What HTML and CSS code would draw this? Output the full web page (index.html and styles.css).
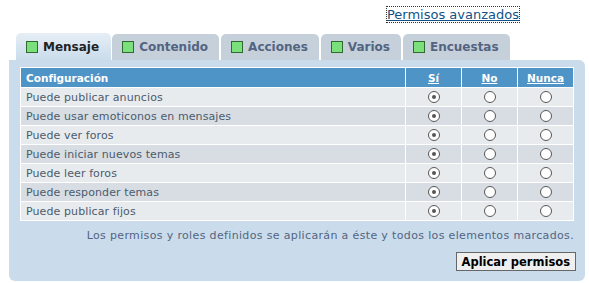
FILE: index.html
```html
<!DOCTYPE html>
<html lang="es">

<head>
    <meta charset="UTF-8">
    <title>Permisos</title>
    <link rel="stylesheet" href="styles.css">
</head>

<body>
    <div class="page">

        <div class="advanced">
            <a href="#" class="advancedLink">Permisos avanzados</a>
        </div>

        <!-- Tabs -->
        <ul class="tabs">
            <li class="tab active"><span class="box"></span>Mensaje</li>
            <li class="tab"><span class="box"></span>Contenido</li>
            <li class="tab"><span class="box"></span>Acciones</li>
            <li class="tab"><span class="box"></span>Varios</li>
            <li class="tab"><span class="box"></span>Encuestas</li>
        </ul>
        <!-- Tabs -->

        <div class="panel">
            <table class="perms">
                <thead>
                    <tr>
                        <th class="name">Configuración</th>
                        <th class="opt"><a href="#">Sí</a></th>
                        <th class="opt"><a href="#">No</a></th>
                        <th class="opt"><a href="#">Nunca</a></th>
                    </tr>
                </thead>
                <tbody>
                    <tr class="row1">
                        <td class="name">Puede publicar anuncios</td>
                        <td class="opt"><input type="radio" name="p1" checked></td>
                        <td class="opt"><input type="radio" name="p1"></td>
                        <td class="opt"><input type="radio" name="p1"></td>
                    </tr>
                    <tr class="row2">
                        <td class="name">Puede usar emoticonos en mensajes</td>
                        <td class="opt"><input type="radio" name="p2" checked></td>
                        <td class="opt"><input type="radio" name="p2"></td>
                        <td class="opt"><input type="radio" name="p2"></td>
                    </tr>
                    <tr class="row1">
                        <td class="name">Puede ver foros</td>
                        <td class="opt"><input type="radio" name="p3" checked></td>
                        <td class="opt"><input type="radio" name="p3"></td>
                        <td class="opt"><input type="radio" name="p3"></td>
                    </tr>
                    <tr class="row2">
                        <td class="name">Puede iniciar nuevos temas</td>
                        <td class="opt"><input type="radio" name="p4" checked></td>
                        <td class="opt"><input type="radio" name="p4"></td>
                        <td class="opt"><input type="radio" name="p4"></td>
                    </tr>
                    <tr class="row1">
                        <td class="name">Puede leer foros</td>
                        <td class="opt"><input type="radio" name="p5" checked></td>
                        <td class="opt"><input type="radio" name="p5"></td>
                        <td class="opt"><input type="radio" name="p5"></td>
                    </tr>
                    <tr class="row2">
                        <td class="name">Puede responder temas</td>
                        <td class="opt"><input type="radio" name="p6" checked></td>
                        <td class="opt"><input type="radio" name="p6"></td>
                        <td class="opt"><input type="radio" name="p6"></td>
                    </tr>
                    <tr class="row1">
                        <td class="name">Puede publicar fijos</td>
                        <td class="opt"><input type="radio" name="p7" checked></td>
                        <td class="opt"><input type="radio" name="p7"></td>
                        <td class="opt"><input type="radio" name="p7"></td>
                    </tr>
                </tbody>
            </table>

            <p class="note">Los permisos y roles definidos se aplicarán a éste y todos los elementos marcados.</p>

            <div class="actions">
                <button class="apply">Aplicar permisos</button>
            </div>
        </div>

    </div>
</body>

</html>
```

FILE: styles.css
```css
body {
    margin: 0;
    background: #ffffff;
    font-family: "DejaVu Sans", Verdana, sans-serif;
}

.page {
    padding: 7px 4px 0 9px;
    width: 576px;
}

.advanced {
    display: flex;
    justify-content: flex-end;
    padding-right: 66px;
    height: 26px;
}

.advancedLink {
    font-size: 13px;
    color: #105289;
    outline: 1px dotted #333;
    line-height: 15px;
    height: 15px;
}

.tabs {
    display: flex;
    list-style-type: none;
    margin: 0;
    padding: 0 0 0 7px;
    height: 27px;
    align-items: flex-end;
}

.tab {
    display: flex;
    align-items: center;
    height: 26px;
    padding: 0 11px 0 10px;
    margin-right: 2px;
    background: #c5d0db;
    border-radius: 5px 5px 0 0;
    font-size: 12px;
    font-weight: bold;
    color: #536482;
}

.tab.active {
    height: 27px;
    padding-right: 12px;
    background: linear-gradient(#e6eef6, #cadceb);
    color: #222;
    margin-right: 1px;
}

.box {
    width: 10px;
    height: 10px;
    border: 1px solid #2f6a2f;
    background: #7be07b;
    margin-right: 5px;
}

.panel {
    background: #cadceb;
    border-radius: 0 6px 6px 6px;
    padding: 7px 11px 10px 11px;
}

.perms {
    width: 100%;
    border-collapse: separate;
    border-spacing: 1px;
    background: #ffffff;
    font-size: 11px;
}

.perms th {
    background: #4f94c6;
    color: #ffffff;
    height: 19px;
    padding: 0;
    font-size: 10.5px;
}

.perms th a {
    color: #ffffff;
}

.perms th.name {
    text-align: left;
    padding-left: 5px;
}

.perms td {
    height: 18px;
    padding: 0;
    color: #4b5b6c;
    letter-spacing: 0.1px;
}

.perms td.name {
    padding-left: 5px;
}

.opt {
    width: 55px;
    text-align: center;
}

.row1 td {
    background: #e8ebee;
}

.row2 td {
    background: #d7dde3;
}

input[type="radio"] {
    appearance: none;
    width: 12px;
    height: 12px;
    margin: 3px 0 0 0;
    border: 1px solid #565656;
    border-radius: 50%;
    background: #ffffff;
    position: relative;
}

input[type="radio"]:checked::after {
    content: "";
    position: absolute;
    left: 3px;
    top: 3px;
    width: 4px;
    height: 4px;
    border-radius: 50%;
    background: #555;
}

.note {
    margin: 8px 0 0 0;
    text-align: right;
    font-size: 11px;
    letter-spacing: 0.35px;
    color: #536482;
    line-height: 14px;
}

.actions {
    display: flex;
    justify-content: flex-end;
    margin-top: 9px;
}

.apply {
    font-family: "DejaVu Sans", Verdana, sans-serif;
    font-weight: bold;
    font-size: 11.5px;
    color: #000;
    background: #efefef;
    border: 1px solid #666;
    padding: 1px 5px;
    height: 19px;
    margin-right: -2px;
    cursor: pointer;
}
```
